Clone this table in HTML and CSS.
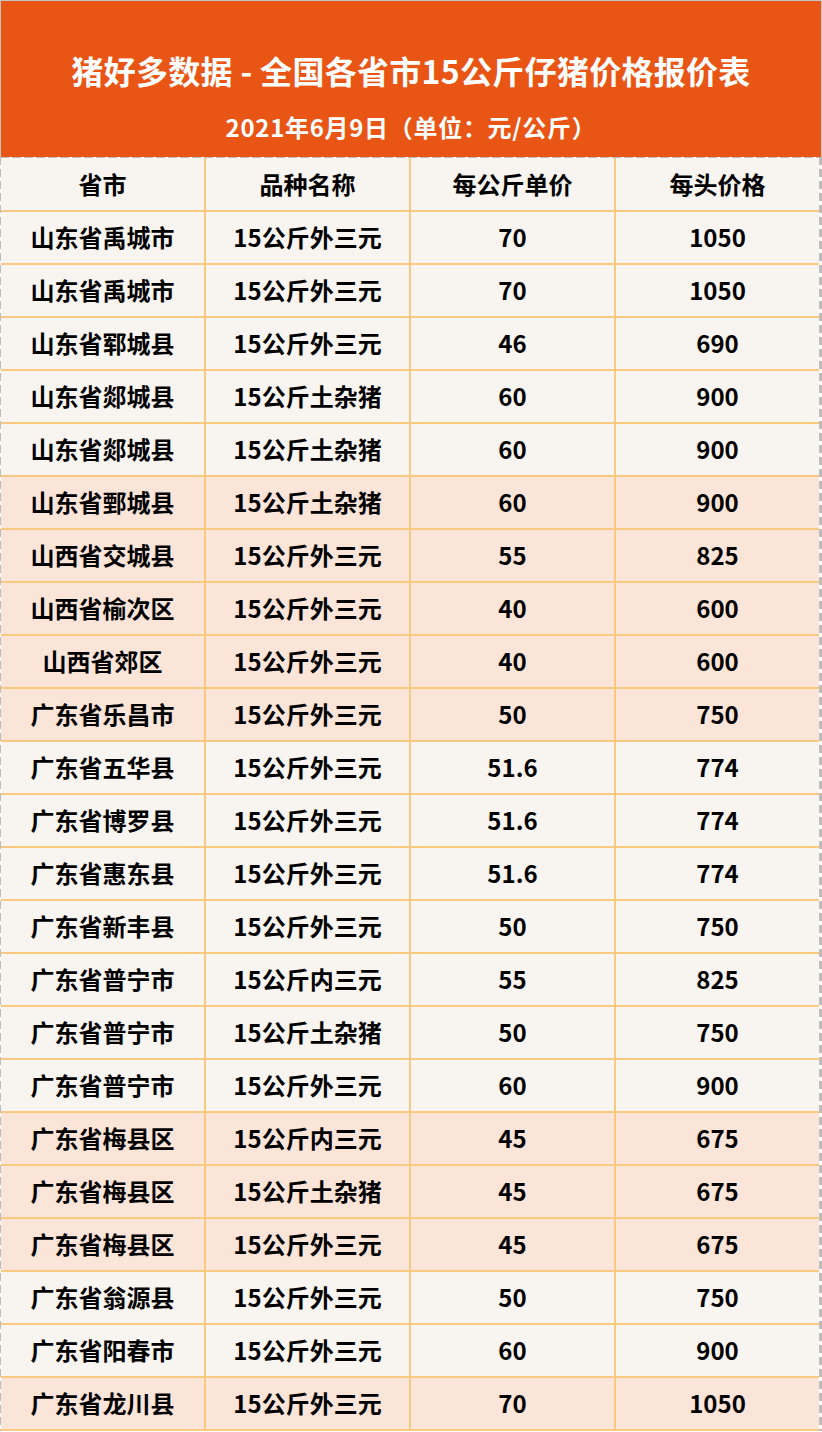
FILE: index.html
```html
<!DOCTYPE html>
<html lang="zh-CN">
<head>
<meta charset="utf-8">
<title>猪好多数据 - 全国各省市15公斤仔猪价格报价表</title>
<link rel="stylesheet" href="styles.css">
</head>
<body>
<div class="page">
  <header class="banner">
    <h1 class="title">猪好多数据 - 全国各省市15公斤仔猪价格报价表</h1>
    <p class="subtitle">2021年6月9日（单位：元/公斤）</p>
  </header>
  <div class="sheet">
    <div class="grid">
      <div class="cell head">省市</div><div class="cell head">品种名称</div><div class="cell head">每公斤单价</div><div class="cell head last">每头价格</div>

      <div class="cell">山东省禹城市</div><div class="cell">15公斤外三元</div><div class="cell">70</div><div class="cell last">1050</div>
      <div class="cell">山东省禹城市</div><div class="cell">15公斤外三元</div><div class="cell">70</div><div class="cell last">1050</div>
      <div class="cell">山东省郓城县</div><div class="cell">15公斤外三元</div><div class="cell">46</div><div class="cell last">690</div>
      <div class="cell">山东省郯城县</div><div class="cell">15公斤土杂猪</div><div class="cell">60</div><div class="cell last">900</div>
      <div class="cell">山东省郯城县</div><div class="cell">15公斤土杂猪</div><div class="cell">60</div><div class="cell last">900</div>
      <div class="cell hi">山东省鄄城县</div><div class="cell hi">15公斤土杂猪</div><div class="cell hi">60</div><div class="cell hi last">900</div>
      <div class="cell hi">山西省交城县</div><div class="cell hi">15公斤外三元</div><div class="cell hi">55</div><div class="cell hi last">825</div>
      <div class="cell hi">山西省榆次区</div><div class="cell hi">15公斤外三元</div><div class="cell hi">40</div><div class="cell hi last">600</div>
      <div class="cell hi">山西省郊区</div><div class="cell hi">15公斤外三元</div><div class="cell hi">40</div><div class="cell hi last">600</div>
      <div class="cell hi">广东省乐昌市</div><div class="cell hi">15公斤外三元</div><div class="cell hi">50</div><div class="cell hi last">750</div>
      <div class="cell">广东省五华县</div><div class="cell">15公斤外三元</div><div class="cell">51.6</div><div class="cell last">774</div>
      <div class="cell">广东省博罗县</div><div class="cell">15公斤外三元</div><div class="cell">51.6</div><div class="cell last">774</div>
      <div class="cell">广东省惠东县</div><div class="cell">15公斤外三元</div><div class="cell">51.6</div><div class="cell last">774</div>
      <div class="cell">广东省新丰县</div><div class="cell">15公斤外三元</div><div class="cell">50</div><div class="cell last">750</div>
      <div class="cell">广东省普宁市</div><div class="cell">15公斤内三元</div><div class="cell">55</div><div class="cell last">825</div>
      <div class="cell">广东省普宁市</div><div class="cell">15公斤土杂猪</div><div class="cell">50</div><div class="cell last">750</div>
      <div class="cell">广东省普宁市</div><div class="cell">15公斤外三元</div><div class="cell">60</div><div class="cell last">900</div>
      <div class="cell hi">广东省梅县区</div><div class="cell hi">15公斤内三元</div><div class="cell hi">45</div><div class="cell hi last">675</div>
      <div class="cell hi">广东省梅县区</div><div class="cell hi">15公斤土杂猪</div><div class="cell hi">45</div><div class="cell hi last">675</div>
      <div class="cell hi">广东省梅县区</div><div class="cell hi">15公斤外三元</div><div class="cell hi">45</div><div class="cell hi last">675</div>
      <div class="cell">广东省翁源县</div><div class="cell">15公斤外三元</div><div class="cell">50</div><div class="cell last">750</div>
      <div class="cell">广东省阳春市</div><div class="cell">15公斤外三元</div><div class="cell">60</div><div class="cell last">900</div>
      <div class="cell hi">广东省龙川县</div><div class="cell hi">15公斤外三元</div><div class="cell hi">70</div><div class="cell hi last">1050</div>
    </div>
  </div>
</div>
</body>
</html>
```

FILE: styles.css
```css
* { box-sizing: border-box; }
html, body { margin: 0; padding: 0; background: #ffffff; }
body {
  font-family: "Noto Sans CJK SC", "Noto Sans", sans-serif;
  font-weight: 700;
  color: #000;
}
.page { width: 822px; }
.banner {
  height: 157px;
  background: #E95515;
  border: 1px solid #c4c4c4;
  border-bottom: none;
  display: flex;
  flex-direction: column;
  align-items: center;
  color: #fff;
}
.title {
  margin: 41px 0 0;
  font-size: 32px;
  line-height: 56px;
  font-weight: 700;
  letter-spacing: 0.3px;
}
.subtitle {
  margin: 15px 0 0;
  font-size: 24px;
  line-height: 28px;
  font-weight: 700;
  letter-spacing: 0.7px;
}
.sheet {
  padding: 1px 3px 0 1px;
  background:
    repeating-linear-gradient(to right, #bdbdbd 0 9px, transparent 9px 12px) left top / 100% 1px no-repeat,
    repeating-linear-gradient(to bottom, #bdbdbd 0 8px, transparent 8px 12px) left top / 1px 100% no-repeat,
    repeating-linear-gradient(to bottom, #bdbdbd 0 8px, transparent 8px 12px) right top / 3px 100% no-repeat;
}
.grid {
  display: grid;
  grid-template-columns: 205px 205px 205px 203px;
  grid-template-rows: 54px;
  grid-auto-rows: 53px;
}
.cell {
  display: flex;
  align-items: center;
  justify-content: center;
  background: #F8F4F0;
  border-right: 2px solid #F9C97F;
  border-bottom: 2px solid #F9C97F;
  font-size: 24px;
  padding-bottom: 2px;
}
.cell.last { border-right: none; }
.cell.hi { background: #FBE4D8; }
```
